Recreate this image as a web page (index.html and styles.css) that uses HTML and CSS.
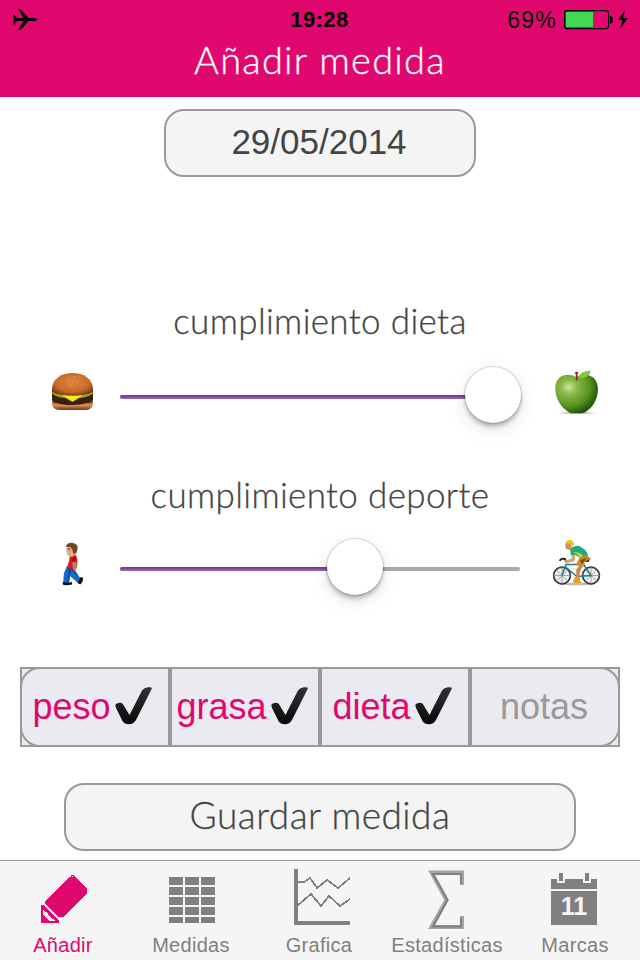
FILE: index.html
```html
<!DOCTYPE html>
<html lang="es">
<head>
<meta charset="utf-8">
<title>Añadir medida</title>
<link rel="stylesheet" href="styles.css">
</head>
<body>
<header class="header">
  <div class="status">
    <svg class="plane" width="26" height="24" viewBox="0 0 26 24"><path d="M1 6.500h1.300l2.700 3.500h6.500L6 1h2.500l8 9H23q2 .1 2 1.500t-2 1.500h-6.500l-8 9H6l5.500-9H5l-2.700 3.500H1l.8-5z"/></svg>
    <span class="clock">19:28</span>
    <div class="power">
      <span class="percent">69%</span>
      <svg width="65" height="24" viewBox="564 8 65 24"><rect x="564.6" y="10.6" width="44" height="18" rx="2.500" fill="none" stroke="#000" stroke-width="1.200"/><path d="M566 12h27v15h-27z" fill="#44d752"/><path d="M610 16q3 .2 3 3.700t-3 3.700z"/><path d="M625 10l-7.200 10h4.500l-2 8.700 7.600-10.800h-4.800z"/></svg>
    </div>
  </div>
  <h1 class="title"><span>Añadir medida</span></h1>
</header>
<main class="content">
  <button class="button date"><span>29/05/2014</span></button>
  <section class="group diet">
    <h2 class="label">cumplimiento dieta</h2>
    <div class="control">
      <svg class="emoji" width="50" height="50" viewBox="48 367 50 50">
        <defs>
          <radialGradient id="bun" cx=".5" cy=".4" r=".65"><stop offset="0" stop-color="#e2843f"/><stop offset=".65" stop-color="#c76a2a"/><stop offset="1" stop-color="#6c3412"/></radialGradient>
          <linearGradient id="base" x2="0" y2="1"><stop stop-color="#a9582c"/><stop offset=".5" stop-color="#d98a55"/><stop offset="1" stop-color="#6c3518"/></linearGradient>
        </defs>
        <path d="M52 401q20 5 41 0v3q-1 6-8 6H60q-7 0-8-6z" fill="url(#base)"/>
        <path d="M52 393h41v7q-1 3-6 3-7 2-15 2-9 0-15-2-4 0-5-3z" fill="#3c1d0e"/>
        <path d="M52 391q20 2 41 0l-.5 3q-7 4-13 4l-7 4-7-4q-7 0-13-4z" fill="#a1a51b"/>
        <path d="M62 395h21l-3 2-7.500 4.500L65 397z" fill="#f4ed20"/>
        <path d="M52 392v-4c1-9 9-15 20.500-15S92 379 93 388v4q-8 3.800-20.500 3.800T52 392z" fill="url(#bun)"/>
        <path d="M68 378l2 .5m4-2 2 .5m1 5 2 .5m-9 3 2 .5m7-9 2 1" stroke="#eba364" stroke-width=".8"/>
      </svg>
      <div class="slider"><div class="fill" style="width:373px"></div><div class="knob" style="left:373px"></div></div>
      <svg class="emoji" width="50" height="50" viewBox="552 367 50 50">
        <defs>
          <radialGradient id="apple" cx=".32" cy=".32" r=".75"><stop offset="0" stop-color="#c8e5a0"/><stop offset=".25" stop-color="#8cba49"/><stop offset=".65" stop-color="#55951e"/><stop offset="1" stop-color="#1c4608"/></radialGradient>
          <radialGradient id="ground"><stop stop-color="#666" stop-opacity=".8"/><stop offset="1" stop-color="#888" stop-opacity="0"/></radialGradient>
        </defs>
        <ellipse cx="577" cy="413" rx="21" ry="1.500" fill="url(#ground)"/>
        <path d="M576 377c-7-4-18-3-20.500 8-1.500 10 4 21 10.500 25 4 4 8 3.500 11 3 4 .6 8 .5 11-3 7-5 11-15 9.700-24-2-12-13-13-21.700-9z" fill="url(#apple)"/>
        <path d="M574.800 372.500q1.600-1.400 3.700 0l-1 2v6h-1.700v-6z" fill="#862f1c"/>
        <path d="M578 379q1-7 12-8-1 8-12 8z" fill="#8bc73d" stroke="#5b9b25" stroke-width=".6"/>
      </svg>
    </div>
  </section>
  <section class="group sport">
    <h2 class="label">cumplimiento deporte</h2>
    <div class="control">
      <svg class="emoji" width="50" height="50" viewBox="48 539 50 50">
        <path d="M67 566h9l-1 5 3 4 3 4-3 4-8-7-1 8h-6l1-11z" fill="#1768cb"/>
        <path d="M67 566h9l-1 5 3 4-3-1-4-5-2 12-2 2 2-11z" fill="#0d459b"/>
        <path d="M63 582q4 1.500 9 0v2.500q-4 1-8.500.5-1.500-.8-.5-3zM77.700 582.500l3-5.500 2.500.7q.2 4-2.500 6.500-2.500.5-3-1.700z" fill="#111"/>
        <path d="M70 555h6l1.500 5-.5 8q-5 1.700-10 0l2-7z" fill="#da1b24"/>
        <path d="M72 560h4l1 7-2 4-2-1-.4-5z" fill="#b88261"/><path d="M72 557h4v5h-4z" fill="#b70d18"/>
        <path d="M67 546h9v8l-4 3-4-1q-1-2-1-4l-1-2z" fill="#e1ac83"/>
        <path d="M66 547q0-4 6-4.200 6.500.7 5.500 6.200l-1 4-3 1-1-4-2-3z" fill="#704624"/><path d="M68 549h2" stroke="#432b1a"/>
      </svg>
      <div class="slider"><div class="fill" style="width:235px"></div><div class="knob" style="left:235px"></div></div>
      <svg class="emoji" width="50" height="50" viewBox="552 539 50 50">
        <ellipse cx="577" cy="584" rx="18" ry="1.400" fill="#bbb"/>
        <g fill="#eee" stroke="#34383a" stroke-width="1.700"><circle cx="562" cy="575.500" r="8.400"/><circle cx="591" cy="575.500" r="8.400"/></g>
        <path d="M562 567v17m-8.500-8.500h17M556 569.500l12 12m0-12-12 12M591 567v17m-8.500-8.500h17M585 569.500l12 12m0-12-12 12" stroke="#8c9193" stroke-width=".8"/>
        <path d="M562 575.500l4-11h16l-5 12-12-10m12 10 14-1-8-12m-6-1h7" fill="none" stroke="#247e8e" stroke-width="1.500"/>
        <path d="M560 561q0-3 5-2l1 3M583 559h6l-1 2h-6" fill="none" stroke="#222" stroke-width="1.800"/>
        <path d="M581 559l2 5-5 6v8" fill="none" stroke="#c98b51" stroke-width="3.500"/>
        <path d="M575 577h5v4l2 2h-8l-1-2z" fill="#ee9c19"/>
        <path d="M574 553l-1 7-8 2" fill="none" stroke="#d6a06c" stroke-width="3"/>
        <path d="M579 554q8-2 11 5l-7 4-2 4-5-2 3-6z" fill="#e18711"/><path d="M580 560l7-2-5 6z" fill="#774317"/>
        <path d="M570 549q4-4 9-3 7 3 9 9l-8 3-6-4-3 2z" fill="#21aa7a"/><path d="M573 552q8 0 10 4l-3 2-3-4z" fill="#d9cd27"/>
        <path d="M565.500 544h6v4l-2 2-3-.7-1-2z" fill="#ce9158"/><path d="M565 544q1-4 5-4t4 5l-2 1-2-2z" fill="#e9c51c"/>
      </svg>
    </div>
  </section>
  <nav class="segments">
    <svg width="0" height="0" class="defs"><defs><linearGradient id="ink" x2="0" y2="1"><stop stop-color="#333"/><stop offset="1" stop-color="#080808"/></linearGradient><symbol id="check" viewBox="0 0 38 38"><path d="M.3 18Q1 16 5 15.700q2.500 0 3.300 2L14.500 28 27 3.500Q29 .6 33 .3q5-.6 3.500 2L21 33q-2.500 4.200-7 4.200T7.500 34L1 21z" fill="url(#ink)"/></symbol></defs></svg>
    <div class="segment first on"><span>peso</span><svg class="check"><use href="#check"/></svg></div>
    <div class="segment on"><span>grasa</span><svg class="check"><use href="#check"/></svg></div>
    <div class="segment on"><span>dieta</span><svg class="check"><use href="#check"/></svg></div>
    <div class="segment last"><span>notas</span></div>
  </nav>
  <button class="button save"><span>Guardar medida</span></button>
</main>
<footer class="tabs">
  <div class="tab active">
    <svg width="64" height="60" viewBox="31 869 64 60"><path d="M71 877h2v-2h-2zM71 877l2-2 14 14v4l-24 24h-5l-13-13v-3l24-24zM41 905h2l16 16v2H41zm2 5v5l6 6h6l-2-2-2-1-3-3v-1l-2-2-2-1z" fill-rule="evenodd"/></svg>
    <span>Añadir</span>
  </div>
  <div class="tab">
    <svg width="64" height="60" viewBox="159 869 64 60"><path d="M169 877h14v8h-14zm16 0h14v8h-14zm16 0h14v8h-14zM169 887h14v8h-14zm16 0h14v8h-14zm16 0h14v8h-14zM169 897h14v8h-14zm16 0h14v8h-14zm16 0h14v8h-14zM169 907h14v8h-14zm16 0h14v8h-14zm16 0h14v8h-14zM169 917h14v6h-14zm16 0h14v6h-14zm16 0h14v6h-14z"/></svg>
    <span>Medidas</span>
  </div>
  <div class="tab">
    <svg width="64" height="60" viewBox="287 869 64 60"><path d="M294 869h4v52h52v4h-56z"/><path d="M298 882h6l6-4 7 10 10-8 11 8 12-10M298 905l13-11 10 12 8-10 11 10 10-7" fill="none" stroke="#808080" stroke-width="1.800"/></svg>
    <span>Grafica</span>
  </div>
  <div class="tab">
    <svg class="smooth" width="64" height="60" viewBox="415 869 64 60"><path d="M462 885v-12.500h-30.500L446.500 900 431.500 927H462v-11" fill="none" stroke="#a5a5a5" stroke-width="4"/><path d="M461 884v-10h-28L447.500 900 433 926.500h28v-9" fill="none" stroke="#808080" stroke-width="2"/></svg>
    <span>Estadísticas</span>
  </div>
  <div class="tab">
    <svg width="64" height="60" viewBox="543 869 64 60"><path d="M551 879h6v4h8v-4h18v4h8v-4h6v10h-46zm8-6h4v8h-4zm26 0h4v8h-4zM551 891h46v34h-46z"/><text class="day" x="574" y="915" text-anchor="middle">11</text></svg>
    <span>Marcas</span>
  </div>
</footer>
</body>
</html>
```
FILE: styles.css
```css
* { box-sizing: border-box; }
body {
  margin: 0;
  width: 640px;
  height: 960px;
  overflow: hidden;
  display: flex;
  flex-direction: column;
  background: #fff;
  color: #444;
  font-family: "Liberation Sans", Arial, sans-serif;
}
svg { display: block; flex: none; }
.header { height: 97px; background: #e0086e; }
.status {
  height: 40px;
  padding: 0 11px 0 12px;
  display: grid;
  grid-template-columns: 1fr auto 1fr;
  align-items: center;
  color: #000;
}
.clock { font-size: 22px; font-weight: 700; line-height: 40px; letter-spacing: .4px; margin-left: -2px; }
.power { display: flex; justify-content: flex-end; align-items: center; gap: 7px; }
.percent { font-size: 23px; letter-spacing: 1.2px; }
.title {
  margin: -2px 0 0;
  text-align: center;
  color: #fff;
  font: 300 38px/42px Lato, sans-serif;
  letter-spacing: 1.25px;
  -webkit-text-stroke: .3px #fff;
}
.content { height: 763px; display: flex; flex-direction: column; align-items: center; padding-top: 12px; }
.button {
  height: 68px;
  padding: 0;
  border: 2px solid #999;
  border-radius: 20px;
  background: #f4f4f4;
  color: #444;
}
.date { width: 312px; padding: 0 2px 3px 0; font: 35px/60px "Liberation Sans", Arial, sans-serif; }
.group { width: 640px; }
.diet { margin-top: 120px; }
.sport { margin-top: 38px; }
.label {
  margin: 0;
  height: 46px;
  text-align: center;
  font: 300 35px/46px Lato, sans-serif;
  letter-spacing: .35px;
  -webkit-text-stroke: .3px #444;
}
.control { height: 82px; display: flex; align-items: center; justify-content: space-between; padding: 0 38px 0 48px; margin-top: 8px; }
.sport .control { margin-top: 6px; }
.slider { position: relative; width: 400px; height: 4px; border-radius: 2px; background: #aaa; margin: 10px 10px 0 0; }
.fill { height: 4px; border-radius: 2px; background: linear-gradient(#673590, #9c6bbb); }
.knob {
  position: absolute;
  top: -28px;
  width: 56px;
  height: 56px;
  margin-left: -28px;
  border-radius: 50%;
  background: #fff;
  box-shadow: 0 0 1px 1px rgba(0,0,0,.15), 0 4px 4px rgba(0,0,0,.24), 0 6px 20px rgba(0,0,0,.1);
}
.segments { display: flex; width: 600px; margin-top: 62px; }
.defs { position: absolute; }
.segment {
  position: relative;
  width: 150px;
  height: 80px;
  border: 2px solid #999;
  background: #ebeaf1;
  display: flex;
  align-items: center;
  justify-content: center;
  gap: 4px;
  padding-right: 2px;
  font-size: 36px;
  line-height: 76px;
  color: #999;
}
.segment.on { color: #e0086e; padding-right: 5px; }
.segment.first::before, .segment.last::before {
  content: "";
  position: absolute;
  inset: -2px;
  border: 2px solid #999;
}
.segment.first::before { border-radius: 20px 0 0 20px; }
.segment.last::before { border-radius: 0 20px 20px 0; }
.check { width: 38px; height: 38px; margin-top: -3px; }
.save {
  width: 512px;
  margin-top: 36px;
  padding-bottom: 4px;
  font: 300 37px/60px Lato, sans-serif;
  letter-spacing: .5px;
  -webkit-text-stroke: .3px #444;
}
.tabs {
  height: 100px;
  display: flex;
  border-top: 1px solid #999;
  background: #f5f5f5;
  margin-left: -1px;
  width: 641px;
}
.tab {
  width: 128px;
  padding-top: 8px;
  display: flex;
  flex-direction: column;
  align-items: center;
  font-size: 20px;
  letter-spacing: .3px;
  line-height: 32px;
  color: #808080;
}
.tab svg { fill: #808080; shape-rendering: crispEdges; }
.tab .smooth { shape-rendering: auto; }
.tab .day { font: 700 25px "Liberation Sans", Arial, sans-serif; letter-spacing: 0; fill: #f5f5f5; }
.tab.active { color: #e0086e; }
.tab.active svg { fill: #e0086e; }
```
